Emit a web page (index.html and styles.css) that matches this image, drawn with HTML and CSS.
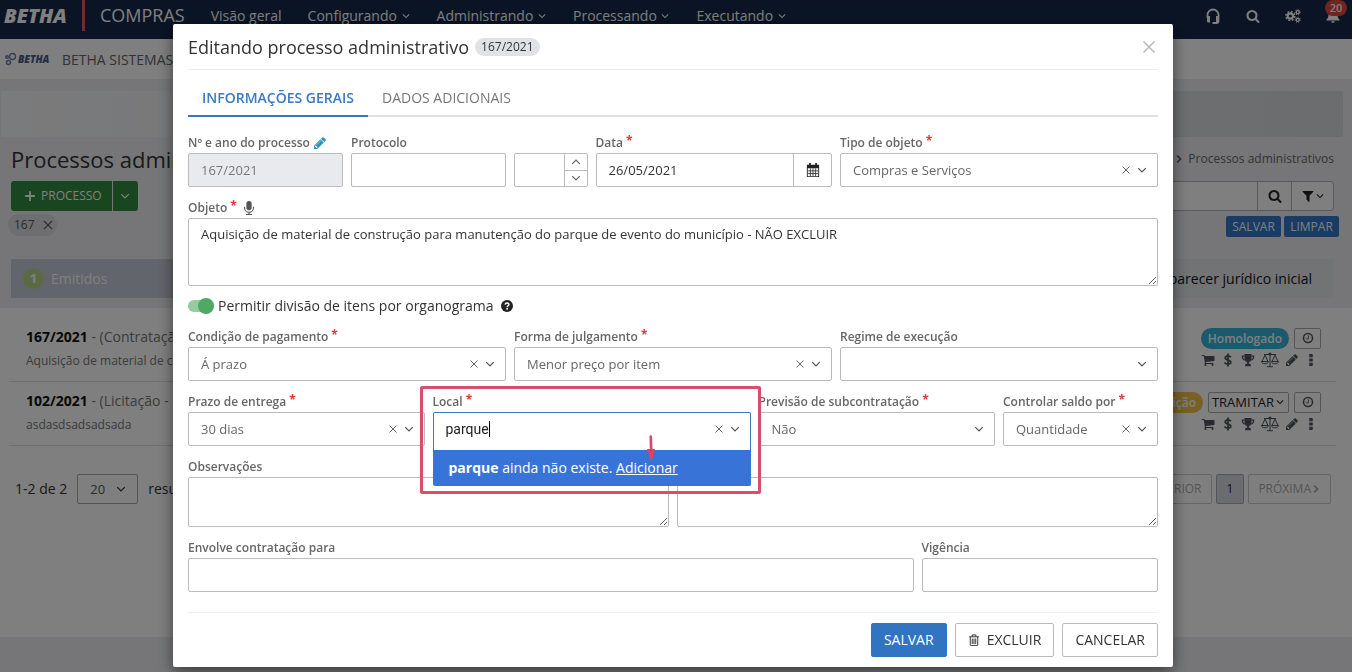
FILE: index.html
```html
<!DOCTYPE html>
<html lang="pt-BR">
<head>
<meta charset="utf-8">
<title>Compras - Processos administrativos</title>
<link rel="stylesheet" href="styles.css">
</head>
<body>
<svg class="sprite" aria-hidden="true">
  <symbol id="down" viewBox="0 0 16 16"><path d="M3 5.500l5 5 5-5" fill="none" stroke="currentColor" stroke-width="1.700"/></symbol>
  <symbol id="up" viewBox="0 0 16 16"><path d="M3 10.500l5-5 5 5" fill="none" stroke="currentColor" stroke-width="1.700"/></symbol>
  <symbol id="right" viewBox="0 0 16 16"><path d="M5 2.500l5.500 5.500L5 13.500" fill="none" stroke="currentColor" stroke-width="2.800"/></symbol>
  <symbol id="x" viewBox="0 0 16 16"><path d="M2.500 2.500l11 11M13.500 2.500l-11 11" fill="none" stroke="currentColor" stroke-width="1.600"/></symbol>
  <symbol id="plus" viewBox="0 0 16 16"><path d="M8 1.500v13M1.500 8h13" stroke="currentColor" stroke-width="2.400"/></symbol>
  <symbol id="search" viewBox="0 0 1792 1792"><path d="M1216 832q0-185-131.500-316.500t-316.500-131.500-316.500 131.500-131.500 316.500 131.500 316.500 316.500 131.500 316.500-131.500 131.500-316.500zm512 832q0 52-38 90t-90 38q-54 0-90-38l-343-342q-179 124-399 124-143 0-273.500-55.500t-225-150-150-225-55.500-273.500 55.500-273.500 150-225 225-150 273.500-55.500 273.500 55.500 225 150 150 225 55.500 273.500q0 220-124 399l343 343q37 37 37 90z"/></symbol>
  <symbol id="pencil" viewBox="0 0 1792 1792"><path d="M491 1536l91-91-235-235-91 91v107h128v128h107zm523-928q0-22-22-22-10 0-17 7l-542 542q-7 7-7 17 0 22 22 22 10 0 17-7l542-542q7-7 7-17zm-54-192l416 416-832 832h-416v-416zm683 96q0 53-37 90l-166 166-416-416 166-165q36-38 90-38 53 0 91 38l235 234q37 39 37 91z"/></symbol>
  <symbol id="cart" viewBox="0 0 1792 1792"><path d="M704 1536q0 52-38 90t-90 38-90-38-38-90 38-90 90-38 90 38 38 90zm896 0q0 52-38 90t-90 38-90-38-38-90 38-90 90-38 90 38 38 90zm128-1088v512q0 24-16.500 42.500t-40.500 21.500l-1044 122q13 60 13 70 0 16-24 64h920q26 0 45 19t19 45-19 45-45 19h-1024q-26 0-45-19t-19-45q0-11 8-31.500t16-36 21.500-40 15.500-29.500l-177-823h-204q-26 0-45-19t-19-45 19-45 45-19h256q16 0 28.500 6.500t19.500 15.500 13 24.500 8 26 5.500 29.500 4.500 26h1201q26 0 45 19t19 45z"/></symbol>
  <symbol id="filter" viewBox="0 0 1792 1792"><path d="M1595 295q17 41-14 70l-493 493v742q0 42-39 59-13 5-25 5-27 0-45-19l-256-256q-19-19-19-45v-486l-493-493q-31-29-14-70 17-39 59-39h1280q42 0 59 39z"/></symbol>
  <symbol id="headset" viewBox="0 0 16 16"><path d="M2.500 10V7a5.500 5.500 0 0 1 11 0v6.500a1.500 1.500 0 0 1-1.500 1.500H9" fill="none" stroke="currentColor" stroke-width="1.800"/><path d="M2 8h3v6.500H3.500A1.500 1.500 0 0 1 2 13zM11 8h3v5a1.500 1.500 0 0 1-1.500 1.500H11zM7.500 14h3v2h-3z"/></symbol>
  <symbol id="cogs" viewBox="0 0 18 16"><g fill="none" stroke="currentColor"><circle cx="6" cy="8" r="3" stroke-width="2.400"/><circle cx="6" cy="8" r="5" stroke-width="1.800" stroke-dasharray="2 1.927"/><circle cx="14.300" cy="3.700" r="1.700" stroke-width="1.500"/><circle cx="14.300" cy="3.700" r="2.900" stroke-width="1.100" stroke-dasharray="1.300 1.303"/><circle cx="14.300" cy="12.300" r="1.700" stroke-width="1.500"/><circle cx="14.300" cy="12.300" r="2.900" stroke-width="1.100" stroke-dasharray="1.300 1.303"/></g></symbol>
  <symbol id="bell" viewBox="0 0 16 16"><path d="M8 0a1 1 0 0 1 1 1c2.500.5 4 2.500 4 5 0 3 1 5 2.500 6v1H.5v-1C2 11 3 9 3 6c0-2.500 1.500-4.500 4-5a1 1 0 0 1 1-1zM6 14h4a2 2 0 0 1-4 0z"/></symbol>
  <symbol id="clock" viewBox="0 0 16 16"><circle cx="8" cy="8" r="6" fill="none" stroke="currentColor" stroke-width="2"/><path d="M8.500 4.500V9H5.500" fill="none" stroke="currentColor" stroke-width="1.200"/></symbol>
  <symbol id="dollar" viewBox="0 0 16 16"><path d="M11.500 4.800C10.500 3.600 9.300 3.200 8 3.200c-4 0-4.300 3.800-.5 4.600 4.800.9 4.800 5 .5 5-1.600 0-3-.6-4-1.700M8 .5v15" fill="none" stroke="currentColor" stroke-width="2"/></symbol>
  <symbol id="trophy" viewBox="0 0 16 16"><path d="M4 1h8v5c0 2.500-1.500 4-3 4.500V12c1.500.2 2.500 1 2.500 3h-7c0-2 1-2.800 2.500-3v-1.500C5.500 10 4 8.500 4 6z"/><path d="M4 3.500H1.500C1.500 6.500 3 8 5 8.200M12 3.500h2.500C14.500 6.500 13 8 11 8.200" fill="none" stroke="currentColor" stroke-width="1.400"/></symbol>
  <symbol id="scales" viewBox="0 0 18 16"><path d="M9 2v12.500M3 2.500h12M6 14.700h6M1 9.500L4 3l3 6.500M11 9.500L14 3l3 6.500" fill="none" stroke="currentColor"/><path d="M.5 9.500h7c0 3-7 3-7 0zM10.500 9.500h7c0 3-7 3-7 0z" fill="none" stroke="currentColor"/><circle cx="9" cy="2" r="1.500"/></symbol>
  <symbol id="dots" viewBox="0 0 16 16"><path d="M5.700 0h4.600v4.300H5.700zM5.700 5.850h4.600v4.300H5.700zM5.700 11.700h4.600V16H5.700z"/></symbol>
  <symbol id="calendar" viewBox="0 0 16 16"><path d="M3.500 0h2v2h5V0h2v2H15v14H1V2h2.500zM2 6v9h12V6z" fill-rule="evenodd"/><path d="M5 6v9M8 6v9M11 6v9M2 9h12M2 12h12" stroke="currentColor" stroke-width=".9"/></symbol>
  <symbol id="mic" viewBox="0 0 16 16"><rect x="5" y="0" width="6" height="10.500" rx="3"/><path d="M3 6.500V8a5 5 0 0 0 10 0V6.500M8 13v2.500M4.500 15.400h7" fill="none" stroke="currentColor" stroke-width="1.200"/></symbol>
  <symbol id="help" viewBox="0 0 16 16"><circle cx="8" cy="8" r="8"/><path d="M5.500 6.200C5.700 3.200 10.500 3.300 10.500 6c0 1.600-2.300 1.700-2.300 3.500M8.200 10.800V13" fill="none" stroke="#fff" stroke-width="2"/></symbol>
  <symbol id="trash" viewBox="0 0 16 16"><path d="M1.500 3.700h13M5.500 3.500V1.200h5v2.300M3 4v10.500c0 .6.400 1 1 1h8c.6 0 1-.4 1-1V4M5.700 6v7.500M8 6v7.500M10.300 6v7.500" fill="none" stroke="currentColor" stroke-width="1.300"/></symbol>
</svg>

<div class="page">
  <header class="topbar">
    <strong class="brand">BETHA</strong>
    <span class="divider"></span>
    <span class="product">COMPRAS</span>
    <nav class="nav">
      <a href="#">Visão geral</a>
      <a href="#">Configurando <svg class="i10"><use href="#down"/></svg></a>
      <a href="#">Administrando <svg class="i10"><use href="#down"/></svg></a>
      <a href="#">Processando <svg class="i10"><use href="#down"/></svg></a>
      <a href="#">Executando <svg class="i10"><use href="#down"/></svg></a>
    </nav>
    <div class="tools">
      <button aria-label="Suporte"><svg class="i16"><use href="#headset"/></svg></button>
      <button aria-label="Pesquisar"><svg class="i14"><use href="#search"/></svg></button>
      <button aria-label="Configurações"><svg class="i16"><use href="#cogs"/></svg></button>
      <button aria-label="Notificações" class="bell"><svg class="i14"><use href="#bell"/></svg><span class="count">20</span></button>
    </div>
  </header>
  <div class="entity">
    <svg class="entity-mark" viewBox="0 0 12 14"><g fill="none" stroke="currentColor" stroke-width="1.400"><circle cx="8" cy="4.500" r="3"/><circle cx="2.500" cy="5" r="1.300"/><circle cx="4" cy="10.500" r="2"/></g></svg>
    <strong class="entity-logo">BETHA</strong>
    <span class="entity-name">BETHA SISTEMAS</span>
  </div>
  <main>
    <section class="upper">
      <div class="banner"></div>
      <div class="heading">
        <h1>Processos administrativos</h1>
        <div class="crumbs"><a href="#">Compras</a><svg class="i10"><use href="#right"/></svg><span>Processos administrativos</span></div>
      </div>
      <div class="toolbar">
        <div class="split">
          <button><svg class="i12"><use href="#plus"/></svg>PROCESSO</button>
          <button aria-label="Mais opções"><svg class="i12"><use href="#down"/></svg></button>
        </div>
        <div class="search">
          <input type="text" aria-label="Pesquisa">
          <button aria-label="Pesquisar"><svg class="i14"><use href="#search"/></svg></button>
          <button aria-label="Filtros"><svg class="i14"><use href="#filter"/></svg><svg class="i10"><use href="#down"/></svg></button>
        </div>
      </div>
      <div class="filters">
        <span class="chip">167 <button aria-label="Remover filtro"><svg class="i12"><use href="#x"/></svg></button></span>
        <div class="filter-actions"><button>SALVAR</button><button>LIMPAR</button></div>
      </div>
      <div class="steps">
        <a href="#" class="step active"><span class="num">1</span>Emitidos</a>
        <a href="#" class="step last">Com parecer jurídico inicial</a>
      </div>
    </section>
    <section class="list">
      <article class="item">
        <div><h2><b>167/2021</b> - (Contratação)</h2><p>Aquisição de material de construção</p></div>
        <div class="side">
          <div class="state"><span class="badge blue">Homologado</span><button class="clock" aria-label="Histórico"><svg class="i12"><use href="#clock"/></svg></button></div>
          <div class="acts"><svg class="i14"><use href="#cart"/></svg><svg class="i14"><use href="#dollar"/></svg><svg class="i14"><use href="#trophy"/></svg><svg class="i18"><use href="#scales"/></svg><svg class="i14"><use href="#pencil"/></svg><svg class="i12"><use href="#dots"/></svg></div>
        </div>
      </article>
      <article class="item">
        <div><h2><b>102/2021</b> - (Licitação -</h2><p>asdasdsadsadsada</p></div>
        <div class="side">
          <div class="state"><span class="badge yellow">Em edição</span><button class="stage">TRAMITAR<svg class="i10"><use href="#down"/></svg></button><button class="clock" aria-label="Histórico"><svg class="i12"><use href="#clock"/></svg></button></div>
          <div class="acts"><svg class="i14"><use href="#cart"/></svg><svg class="i14"><use href="#dollar"/></svg><svg class="i14"><use href="#trophy"/></svg><svg class="i18"><use href="#scales"/></svg><svg class="i14"><use href="#pencil"/></svg><svg class="i12"><use href="#dots"/></svg></div>
        </div>
      </article>
      <div class="pager">
        <span>1-2 de 2</span>
        <span class="per-page"><select aria-label="Resultados por página"><option>20</option></select><svg class="i12"><use href="#down"/></svg></span>
        <span>resultados</span>
        <div class="pages"><button>ANTERIOR</button><button class="current">1</button><button>PRÓXIMA<svg class="i10"><use href="#right"/></svg></button></div>
      </div>
    </section>
  </main>
</div>

<div class="backdrop">
  <form class="modal" role="dialog" aria-labelledby="modal-title">
    <header class="modal-head">
      <h2 id="modal-title">Editando processo administrativo</h2>
      <span class="tag">167/2021</span>
      <button type="button" class="close" aria-label="Fechar"><svg class="i18"><use href="#x"/></svg></button>
    </header>
    <nav class="tabs"><a href="#" class="on">INFORMAÇÕES GERAIS</a><a href="#">DADOS ADICIONAIS</a></nav>
    <div class="fields">
      <div class="field c2"><label for="numero">Nº e ano do processo <svg class="i14 edit"><use href="#pencil"/></svg></label><input id="numero" type="text" class="box" value="167/2021" disabled></div>
      <div class="field c2"><label for="protocolo">Protocolo</label><input id="protocolo" type="text" class="box"></div>
      <div class="field c1"><div class="box group"><input type="text" aria-label="Ano do protocolo"><span class="spin"><button type="button" aria-label="Aumentar"><svg class="i12"><use href="#up"/></svg></button><button type="button" aria-label="Diminuir"><svg class="i12"><use href="#down"/></svg></button></span></div></div>
      <div class="field c3"><label for="data">Data <i>*</i></label><div class="box group"><input id="data" type="text" class="dark" value="26/05/2021"><button type="button" class="cal" aria-label="Abrir calendário"><svg class="i14"><use href="#calendar"/></svg></button></div></div>
      <div class="field c4"><label for="tipo">Tipo de objeto <i>*</i></label><div class="box group"><select id="tipo"><option>Compras e Serviços</option></select><button type="button" class="clear" aria-label="Limpar"><svg class="i10"><use href="#x"/></svg></button><svg class="i12 arrow"><use href="#down"/></svg></div></div>

      <div class="field c12"><label for="objeto">Objeto <i>*</i><svg class="i14 mic"><use href="#mic"/></svg></label><textarea id="objeto" class="box tall">Aquisição de material de construção para manutenção do parque de evento do município - NÃO EXCLUIR</textarea></div>

      <label class="toggle"><input type="checkbox" checked><span>Permitir divisão de itens por organograma</span><svg class="i12"><use href="#help"/></svg></label>

      <div class="field c4"><label for="pagamento">Condição de pagamento <i>*</i></label><div class="box group"><select id="pagamento"><option>Á prazo</option></select><button type="button" class="clear" aria-label="Limpar"><svg class="i10"><use href="#x"/></svg></button><svg class="i12 arrow"><use href="#down"/></svg></div></div>
      <div class="field c4"><label for="julgamento">Forma de julgamento <i>*</i></label><div class="box group"><select id="julgamento"><option>Menor preço por item</option></select><button type="button" class="clear" aria-label="Limpar"><svg class="i10"><use href="#x"/></svg></button><svg class="i12 arrow"><use href="#down"/></svg></div></div>
      <div class="field c4"><label for="regime">Regime de execução</label><div class="box group"><select id="regime"><option></option></select><svg class="i12 arrow"><use href="#down"/></svg></div></div>

      <div class="field c3"><label for="prazo">Prazo de entrega <i>*</i></label><div class="box group"><select id="prazo"><option>30 dias</option></select><button type="button" class="clear" aria-label="Limpar"><svg class="i10"><use href="#x"/></svg></button><svg class="i12 arrow"><use href="#down"/></svg></div></div>
      <div class="field c4 local"><label for="local">Local <i>*</i></label><div class="box group open"><input id="local" type="text" value="parque"><span class="caret"></span><button type="button" class="clear" aria-label="Limpar"><svg class="i10"><use href="#x"/></svg></button><svg class="i12 arrow"><use href="#down"/></svg></div>
        <div class="menu"><p><b>parque</b> ainda não existe. <a href="#">Adicionar</a></p></div>
        <div class="mark"><svg class="pointer" viewBox="0 0 10 28"><path d="M3.500 1.500a1.200 1.200 0 0 1 2.500 0L6.500 14H9L5.500 27 1 14h2.800z"/></svg></div>
      </div>
      <div class="field c3"><label for="previsao">Previsão de subcontratação <i>*</i></label><div class="box group"><select id="previsao"><option>Não</option></select><svg class="i12 arrow"><use href="#down"/></svg></div></div>
      <div class="field c2"><label for="saldo">Controlar saldo por <i>*</i></label><div class="box group"><select id="saldo"><option>Quantidade</option></select><button type="button" class="clear" aria-label="Limpar"><svg class="i10"><use href="#x"/></svg></button><svg class="i12 arrow"><use href="#down"/></svg></div></div>

      <div class="field c6"><label for="obs">Observações</label><textarea id="obs" class="box short"></textarea></div>
      <div class="field c6"><textarea class="box short" aria-label="Justificativa"></textarea></div>

      <div class="field c9"><label for="envolve">Envolve contratação para</label><input id="envolve" type="text" class="box"></div>
      <div class="field c3"><label for="vigencia">Vigência</label><input id="vigencia" type="text" class="box"></div>
    </div>
    <footer class="modal-foot">
      <button type="button" class="btn primary">SALVAR</button>
      <button type="button" class="btn"><svg class="i12"><use href="#trash"/></svg>EXCLUIR</button>
      <button type="button" class="btn">CANCELAR</button>
    </footer>
  </form>
</div>
</body>
</html>
```
FILE: styles.css
```css
* { box-sizing: border-box; }
body { margin: 0; overflow: hidden; font: 14px/20px "Open Sans", sans-serif; color: #333; background: #ecedf0; }
h1, h2, p { margin: 0; font-size: 14px; font-weight: 400; }
a { color: inherit; text-decoration: none; }
button, input, select, textarea { font: inherit; color: inherit; }
button { padding: 0; border: 0; background: none; display: flex; align-items: center; justify-content: center; white-space: nowrap; }
svg { fill: currentColor; flex: none; }
.sprite { position: absolute; width: 0; height: 0; }
.i10 { width: 10px; height: 10px; }
.i12 { width: 12px; height: 12px; }
.i14 { width: 14px; height: 14px; }
.i16 { width: 16px; height: 16px; }
.i18 { width: 18px; height: 16px; }

/* Page */
.page { height: 100vh; overflow: hidden; white-space: nowrap; }
.topbar { display: flex; align-items: center; height: 39px; padding: 0 12px 8px 4px; background: #14294a; color: #fff; }
.brand { width: 78px; font-size: 20px; font-weight: 800; font-style: italic; }
.divider { width: 3px; height: 31px; background: #e5546f; }
.product { margin-left: 15px; font-size: 18px; line-height: 20px; padding-bottom: 2px; }
.nav { display: flex; gap: 26px; margin-left: 26px; }
.tools { display: flex; align-items: center; gap: 25px; margin-left: auto; }
.bell { position: relative; }
.count { position: absolute; top: -9px; left: -1px; width: 22px; height: 16px; border-radius: 9px; background: #e0483e; font-size: 11px; line-height: 16px; font-weight: 600; }
.entity { display: flex; align-items: center; height: 40px; padding-left: 4px; background: #fff; color: #666; }
.entity-mark { width: 13px; height: 14px; color: #6d7ea8; }
.entity-logo { width: 43px; padding-left: 1px; font-size: 10px; font-weight: 800; font-style: italic; color: #4a5c8c; }
.entity-name { padding: 1px 0 0 2px; }
.upper { padding-top: 12px; }
.banner { height: 46px; margin: 0 9px 0 1px; border-radius: 3px; background: linear-gradient(90deg, #f5f6f8, #d8dade); }
.heading { display: flex; align-items: center; justify-content: space-between; height: 44px; padding: 0 18px 0 11px; }
.heading h1 { font-size: 22px; line-height: 30px; }
.crumbs { display: flex; align-items: center; gap: 4px; font-size: 12px; color: #666; }
.toolbar { display: flex; justify-content: space-between; height: 30px; padding: 0 18px 0 11px; }
.split { display: flex; color: #fff; }
.split button { padding: 0 10px 0 13px; gap: 5px; border-radius: 3px 0 0 3px; background: #358a43; font-size: 12px; }
.split button + button { width: 25px; padding: 0; margin-left: 1px; border-radius: 0 3px 3px 0; }
.search { display: flex; width: 400px; border: 1px solid #b5b5b8; border-radius: 3px; background: #fff; color: #222; }
.search input { flex: 1; min-width: 0; border: 0; background: none; }
.search button { width: 34px; border-left: 1px solid #b5b5b8; }
.search button:last-child { width: 42px; }
.filters { display: flex; justify-content: space-between; padding: 3px 13px 22px 8px; }
.chip { display: flex; align-items: center; gap: 7px; height: 22px; padding: 0 3px 0 6px; border-radius: 11px; background: #dcdde1; font-size: 12px; color: #555; }
.filter-actions { display: flex; gap: 3px; padding-top: 2px; }
.filter-actions button { width: 55px; height: 21px; border-radius: 2px; background: #3276c8; color: #fff; font-size: 12px; }
.steps { display: flex; justify-content: space-between; margin: 0 18px 10px 11px; background: #e4e6eb; }
.step { display: flex; align-items: center; gap: 7px; height: 39px; padding-right: 22px; }
.step.active { flex: 0 0 300px; padding-left: 12px; background: #c5cad6; color: #fff; }
.step.last { color: #111; }
.num { width: 21px; height: 21px; border-radius: 50%; background: #b5d58a; text-align: center; font-size: 13px; font-weight: 700; }
.list { min-height: 329px; padding: 10px 16px 0 9px; background: #fff; }
.item { display: flex; justify-content: space-between; height: 64px; padding: 9px 15px 0 17px; border-bottom: 1px solid #ddd; color: #777; }
.item b { color: #111; }
.item p { padding-top: 5px; font-size: 12px; line-height: 18px; }
.state { display: flex; align-items: center; justify-content: flex-end; gap: 5px; height: 22px; }
.badge { padding: 0 7px; border-radius: 11px; color: #fff; font-size: 12px; line-height: 21px; font-weight: 600; }
.blue { background: #36b4da; }
.yellow { background: #f2c24c; }
.clock, .stage { height: 21px; border: 1px solid #aaa; border-radius: 2px; color: #555; }
.clock { width: 27px; }
.stage { width: 81px; gap: 1px; font-size: 13px; color: #222; }
.acts { display: flex; align-items: center; justify-content: flex-end; gap: 6px; height: 22px; padding-right: 4px; color: #50555e; }
.pager { display: flex; align-items: center; gap: 10px; padding: 28px 5px 0 6px; }
.per-page { display: flex; align-items: center; width: 61px; height: 30px; padding: 0 10px 0 12px; border: 1px solid #aaa; border-radius: 2px; }
.per-page select { appearance: none; flex: 1; min-width: 0; padding: 0; border: 0; background: none; font-size: 13px; color: #555; }
.pages { display: flex; gap: 4px; margin-left: auto; color: #aaa; font-size: 12px; }
.pages button { height: 30px; padding: 0 9px; border: 1px solid #ccc; border-radius: 2px; }
.pages .current { padding: 0 10px; background: #d5d8df; border-color: #aaa; color: #222; }

/* Modal */
.backdrop { position: fixed; inset: 0; padding: 24px 6px 0 0; background: rgba(0, 0, 0, .5); }
.modal { width: 1000px; max-width: 100%; margin: 0 auto; padding: 0 15px 10px; border-radius: 2px; background: #fff; box-shadow: 0 5px 15px rgba(0, 0, 0, .5); }
.modal-head { display: flex; align-items: center; gap: 6px; height: 46px; border-bottom: 1px solid #eee; }
.modal-head h2 { font-size: 18px; line-height: 24px; }
.tag { padding: 0 6px; border-radius: 9px; background: #e1e2e6; font-size: 12px; line-height: 18px; }
.close { margin-left: auto; color: #bbb; }
.tabs { display: flex; height: 47px; padding-top: 8px; border-bottom: 2px solid #e0e0e0; color: #777; }
.tabs a { height: 39px; padding: 0 14px; line-height: 40px; }
.tabs .on { border-bottom: 2px solid #3b73ba; color: #3b78c8; font-weight: 600; }
.fields { display: grid; grid-template-columns: repeat(12, minmax(0, 1fr)); gap: 11px 8px; padding: 16px 0 20px; align-items: end; }
.c1 { grid-column: span 1; }
.c2 { grid-column: span 2; }
.c3 { grid-column: span 3; }
.c4 { grid-column: span 4; }
.c6 { grid-column: span 6; }
.c9 { grid-column: span 9; }
.c12 { grid-column: span 12; }
.field { display: flex; flex-direction: column; }
.field label { display: flex; align-items: center; gap: 3px; height: 20px; font-size: 12px; font-weight: 600; color: #666; white-space: nowrap; }
.field label i { align-self: flex-start; font-size: 12px; line-height: 16px; font-weight: 700; font-style: normal; color: #d83a3a; }
.edit { color: #2a93c4; }
.label .mic, .mic { margin-left: 2px; color: #555; }
.box { width: 100%; height: 34px; padding: 0 12px; border: 1px solid #bbb; border-radius: 2px; background: #fff; font-size: 13px; color: #666; }
.box:disabled { background: #e9eaee; color: #777; }
.group { display: flex; align-items: center; padding: 0; }
.group input, .group select { flex: 1; align-self: stretch; min-width: 0; padding: 0 0 0 12px; border: 0; outline: 0; appearance: none; background: none; }
.group .dark { color: #333; }
.spin { display: flex; flex-direction: column; width: 23px; height: 100%; border-left: 1px solid #bbb; }
.spin button { flex: 1; }
.spin button + button { border-top: 1px solid #bbb; }
.cal { width: 38px; height: 100%; border-left: 1px solid #bbb; color: #222; }
.arrow { margin: 0 9px 0 5px; color: #555; }
textarea.box { display: block; padding: 5px 12px; resize: vertical; color: #333; }
textarea.tall { height: 68px; }
textarea.short { height: 50px; }
.toggle { grid-column: span 12; display: flex; align-items: center; gap: 4px; height: 19px; padding-bottom: 1px; }
.toggle svg { margin-left: 3px; color: #222; }
.toggle input { appearance: none; position: relative; width: 26px; height: 12px; margin: 0; border-radius: 6px; background: #94cca0; }
.toggle input::after { content: ""; position: absolute; top: -2px; right: 0; width: 16px; height: 16px; border-radius: 50%; background: #4fa863; }
.local { position: relative; z-index: 1; }
.open { border-color: #3c78b4; border-bottom-color: transparent; }
.group #local { flex: none; field-sizing: content; font-family: Roboto, sans-serif; font-size: 14px; color: #222; }
.caret { width: 1px; height: 16px; margin-right: auto; background: #000; }
.menu { position: absolute; top: 53px; left: 0; right: 0; border: 1px solid #3874d8; border-top: 0; border-radius: 0 0 2px 2px; background: #fff; padding-top: 5px; }
.menu p { padding: 8px 15px 7px; background: #3874d8; color: #fff; font-weight: 500; }
.menu b { font-weight: 700; }
.menu a { text-decoration: underline; }
.mark { position: absolute; top: -6px; left: -13px; right: -10px; height: 108px; border: 3px solid #d94e6b; border-radius: 2px; pointer-events: none; }
.pointer { position: absolute; left: 223px; top: 46px; width: 10px; height: 28px; color: #d94462; }
.modal-foot { display: flex; justify-content: flex-end; gap: 8px; padding-top: 10px; border-top: 1px solid #f0f0f0; }
.btn { height: 34px; padding: 0 12px; gap: 7px; border: 1px solid #bbb; border-radius: 2px; background: #fff; }
.primary { border-color: #3174c2; background: #3174c2; color: #fff; font-weight: 500; }
```
